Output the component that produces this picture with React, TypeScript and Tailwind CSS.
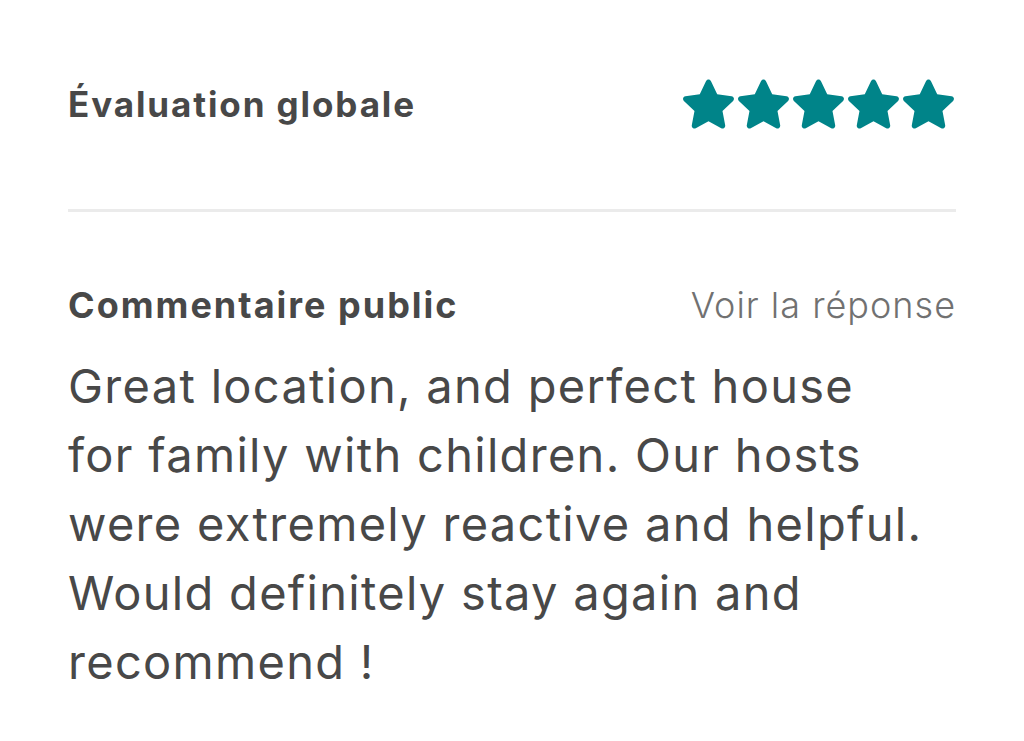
const STAR_PATH =
  'M12 2.2c.4 0 .75.23.92.6l2.42 5.1 5.53.72c.4.05.73.33.85.72.12.38.01.8-.28 1.08l-4.07 3.86 1.04 5.5c.07.4-.09.8-.42 1.03-.32.24-.75.26-1.1.07L12 18.2l-4.9 2.68c-.35.19-.78.17-1.1-.07-.33-.23-.49-.63-.42-1.03l1.04-5.5-4.07-3.86c-.29-.28-.4-.7-.28-1.08.12-.39.45-.67.85-.72l5.53-.72 2.42-5.1c.17-.37.52-.6.92-.6z'

function Star() {
  return (
    <svg viewBox="2 2 20 19.2" className="w-[53px] h-[50px]" fill="#008489">
      <path d={STAR_PATH} />
    </svg>
  )
}

export default function App() {
  const font = { fontFamily: 'Inter, "Noto Sans", sans-serif' }

  return (
    <div className="w-[1024px] h-[741px] bg-white overflow-hidden" style={font}>
      <div className="px-[68px]">
        {/* Overall rating */}
        <div className="mt-[78px] h-[52px] flex items-center justify-between">
          <h2 className="text-[35px] font-bold text-[#484848] tracking-[1.9px]">Évaluation globale</h2>
          <div className="flex items-center gap-[2px] mr-[1px]">
            <Star />
            <Star />
            <Star />
            <Star />
            <Star />
          </div>
        </div>

        <div className="mt-[79px] h-[3px] bg-[#ebebeb]" />

        {/* Public comment */}
        <div className="mt-[73px] h-[40px] flex items-center justify-between">
          <h3 className="text-[36px] font-bold text-[#484848] tracking-[2px]">Commentaire public</h3>
          <span className="text-[36px] font-light text-[#717171] tracking-[1px]">Voir la réponse</span>
        </div>

        <p className="mt-[26px] text-[47px] leading-[69px] text-[#484848] tracking-[1.3px]">
          Great location, and perfect house
          <br />
          for family with children. Our hosts
          <br />
          were extremely reactive and helpful.
          <br />
          Would definitely stay again and
          <br />
          recommend !
        </p>
      </div>
    </div>
  )
}
